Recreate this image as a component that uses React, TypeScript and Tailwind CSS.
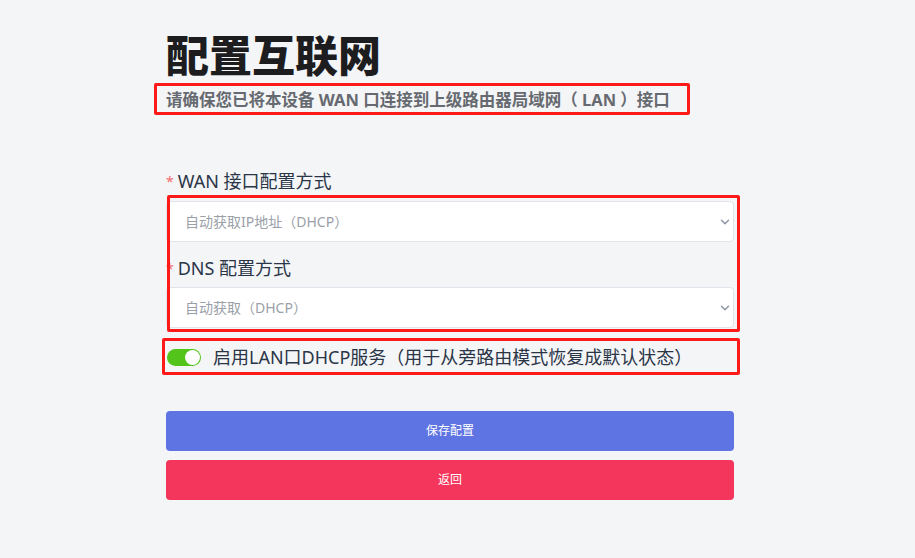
import { ChevronDown } from 'lucide-react';

const FONT = { fontFamily: '"Noto Sans", "Noto Sans CJK SC", sans-serif' };

// ─── Select field ─────────────────────────────────────────────────────────────

function SelectField({ value }: { value: string }) {
  return (
    <div className="flex items-center justify-between h-[41px] w-full rounded-[4px] border border-[#e1e4ea] bg-white pl-[18px] pr-[1px]">
      <span className="text-[14px] text-[#9aa0a8]">{value}</span>
      <ChevronDown size={14} strokeWidth={2.5} className="text-[#8c95a5]" />
    </div>
  );
}

function FieldLabel({ children }: { children: string }) {
  return (
    <div className="flex items-center gap-[4px] h-[24px] text-[18px] text-[#2b3548]">
      <span className="text-[#f56c6c] text-[14px]">*</span>
      <span>{children}</span>
    </div>
  );
}

// ─── App ──────────────────────────────────────────────────────────────────────

export default function App() {
  return (
    <div className="min-h-[558px] w-[915px] bg-[#f4f5f7]" style={FONT}>
      <div className="relative ml-[166px] w-[568px] pt-[30px]">
        <h1 className="text-[43px] font-black leading-[52px] text-[#1d1d1f]">配置互联网</h1>
        <p className="mt-[3px] h-[30px] flex items-center text-[16.5px] font-bold text-[#666a70]">
          请确保您已将本设备 WAN 口连接到上级路由器局域网（ LAN ）接口
        </p>

        <div className="mt-[54px]">
          <FieldLabel>WAN 接口配置方式</FieldLabel>
          <div className="mt-[8px]">
            <SelectField value="自动获取IP地址（DHCP）" />
          </div>
          <div className="mt-[14px]">
            <FieldLabel>DNS 配置方式</FieldLabel>
          </div>
          <div className="mt-[7px]">
            <SelectField value="自动获取（DHCP）" />
          </div>
        </div>

        <div className="mt-[16px] flex items-center gap-[12px] pl-[1px]">
          <div className="relative h-[17px] w-[34px] rounded-full bg-[#52c41a]">
            <span className="absolute right-[1px] top-[1px] h-[15px] w-[15px] rounded-full bg-white" />
          </div>
          <span className="text-[18px] text-[#2b3548]">启用LAN口DHCP服务（用于从旁路由模式恢复成默认状态）</span>
        </div>

        <div className="mt-[40px] flex flex-col gap-[9px]">
          <button className="h-[40px] w-full rounded-[4px] bg-[#5f74e3] text-[12px] text-white">保存配置</button>
          <button className="h-[40px] w-full rounded-[4px] bg-[#f5365c] text-[12px] text-white">返回</button>
        </div>

        {/* annotation boxes */}
        <div className="pointer-events-none absolute left-[-12px] top-[83px] h-[32px] w-[536px] rounded-[2px] border-[3px] border-[#ff1a1a]" />
        <div className="pointer-events-none absolute left-[1px] top-[195px] h-[137px] w-[573px] rounded-[2px] border-[3px] border-[#ff1a1a]" />
        <div className="pointer-events-none absolute left-[-4px] top-[338px] h-[37px] w-[578px] rounded-[2px] border-[3px] border-[#ff1a1a]" />
      </div>
    </div>
  );
}
